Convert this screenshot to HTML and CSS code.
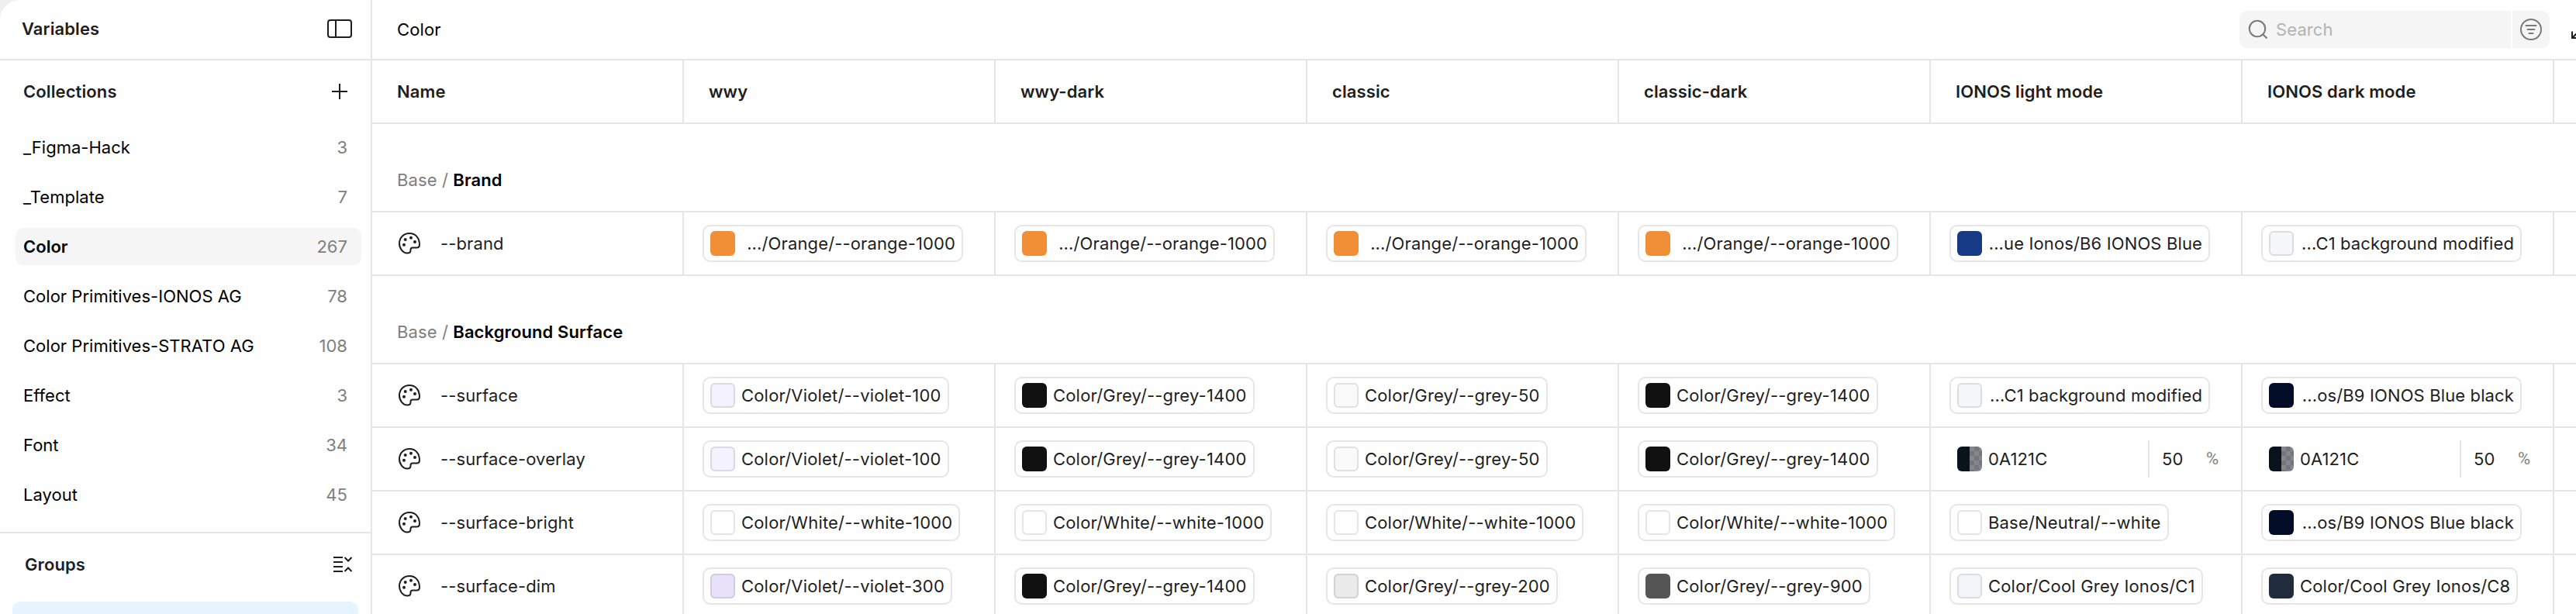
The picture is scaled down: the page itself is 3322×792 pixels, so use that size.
FILE: index.html
```html
<!DOCTYPE html>
<html lang="en">
<head>
  <meta charset="UTF-8">
  <meta name="viewport" content="width=device-width, initial-scale=1.0">
  <title>Variables</title>
  <link rel="stylesheet" href="styles.css">
</head>
<body>
  <svg class="defs" width="0" height="0">
    <symbol id="palette" viewBox="0 0 32 32">
      <path d="M16 3C8.500 3 3 8.500 3 16C3 23 8 28.500 13 28.500C16 28.500 17.500 27 17.500 25V24C17.500 22.500 18.500 21.500 20 21.500H25.500C27.800 21.500 29 20 29 17.500C29 9 24 3 16 3Z" fill="none" stroke="#1e1e1e" stroke-width="2"/>
      <g fill="#1e1e1e">
        <circle cx="10.700" cy="11" r="2"/>
        <circle cx="18" cy="8.700" r="2"/>
        <circle cx="23" cy="14" r="2"/>
        <circle cx="9" cy="17.700" r="2"/>
      </g>
    </symbol>
  </svg>

  <div class="app">
    <aside class="sidebar">
      <div class="sidebar-header">
        <h1>Variables</h1>
        <svg class="icon-panel" width="32" height="24" viewBox="0 0 32 24" fill="none" stroke="#1e1e1e" stroke-width="2">
          <rect x="1" y="1" width="30" height="22" rx="3"/>
          <path d="M11 1V23"/>
        </svg>
      </div>

      <div class="sidebar-title">
        <h2>Collections</h2>
        <svg class="icon-plus" width="20" height="20" viewBox="0 0 20 20" stroke="#1e1e1e" stroke-width="2">
          <path d="M10 0V20M0 10H20"/>
        </svg>
      </div>
      <ul class="collections">
        <li><span>_Figma-Hack</span><span class="count">3</span></li>
        <li><span>_Template</span><span class="count">7</span></li>
        <li class="active"><span>Color</span><span class="count">267</span></li>
        <li><span>Color Primitives-IONOS AG</span><span class="count">78</span></li>
        <li><span>Color Primitives-STRATO AG</span><span class="count">108</span></li>
        <li><span>Effect</span><span class="count">3</span></li>
        <li><span>Font</span><span class="count">34</span></li>
        <li><span>Layout</span><span class="count">45</span></li>
      </ul>

      <div class="sidebar-title groups-title">
        <h2>Groups</h2>
        <svg class="icon-collapse" width="24" height="20" viewBox="0 0 24 20" fill="none" stroke="#1e1e1e" stroke-width="2">
          <path d="M0 1H12M0 7H12M0 13H12M0 19H12"/>
          <path d="M14.500 1L19 5.500L23.500 1M14.500 19L19 14.500L23.500 19"/>
        </svg>
      </div>
      <div class="group-active"></div>
    </aside>

    <main class="main">
      <div class="toolbar">
        <span class="toolbar-title">Color</span>
        <div class="search">
          <div class="search-field">
            <svg width="26" height="26" viewBox="0 0 26 26" fill="none" stroke="#7a7a7a" stroke-width="2">
              <circle cx="13" cy="12" r="10.200"/>
              <path d="M20 19L25.500 24.500"/>
            </svg>
            <span>Search</span>
          </div>
          <div class="search-filter">
            <svg width="28" height="28" viewBox="0 0 28 28" fill="none" stroke="#7a7a7a" stroke-width="2">
              <circle cx="14" cy="14" r="13"/>
              <path d="M7.500 9H20.500M9.500 14H18.500M11.500 19H16.500" stroke-linecap="round"/>
            </svg>
          </div>
        </div>
        <svg class="icon-resize" width="28" height="28" viewBox="0 0 28 28" fill="none" stroke="#1e1e1e" stroke-width="2">
          <path d="M3 16.500V25H12M3.500 24.500L12 16"/>
        </svg>
      </div>

      <div class="row head">
        <div>Name</div><div>wwy</div><div>wwy-dark</div><div>classic</div><div>classic-dark</div><div>IONOS light mode</div><div>IONOS dark mode</div><div></div>
      </div>

      <div class="section"><span>Base / </span>Brand</div>
      <div class="row">
        <div class="name"><svg><use href="#palette"/></svg>--brand</div>
        <div><span class="chip cut"><i class="orange"></i><b>.../Orange/--orange-1000</b></span></div>
        <div><span class="chip cut"><i class="orange"></i><b>.../Orange/--orange-1000</b></span></div>
        <div><span class="chip cut"><i class="orange"></i><b>.../Orange/--orange-1000</b></span></div>
        <div><span class="chip cut"><i class="orange"></i><b>.../Orange/--orange-1000</b></span></div>
        <div><span class="chip cut"><i class="ionos-blue"></i><b>...ue Ionos/B6 IONOS Blue</b></span></div>
        <div><span class="chip cut"><i class="c1"></i><b>...C1 background modified</b></span></div>
        <div></div>
      </div>

      <div class="section"><span>Base / </span>Background Surface</div>
      <div class="row">
        <div class="name"><svg><use href="#palette"/></svg>--surface</div>
        <div><span class="chip"><i class="violet-100"></i><b>Color/Violet/--violet-100</b></span></div>
        <div><span class="chip"><i class="grey-1400"></i><b>Color/Grey/--grey-1400</b></span></div>
        <div><span class="chip"><i class="grey-50"></i><b>Color/Grey/--grey-50</b></span></div>
        <div><span class="chip"><i class="grey-1400"></i><b>Color/Grey/--grey-1400</b></span></div>
        <div><span class="chip cut"><i class="c1"></i><b>...C1 background modified</b></span></div>
        <div><span class="chip cut"><i class="blue-black"></i><b>...os/B9 IONOS Blue black</b></span></div>
        <div></div>
      </div>
      <div class="row">
        <div class="name"><svg><use href="#palette"/></svg>--surface-overlay</div>
        <div><span class="chip"><i class="violet-100"></i><b>Color/Violet/--violet-100</b></span></div>
        <div><span class="chip"><i class="grey-1400"></i><b>Color/Grey/--grey-1400</b></span></div>
        <div><span class="chip"><i class="grey-50"></i><b>Color/Grey/--grey-50</b></span></div>
        <div><span class="chip"><i class="grey-1400"></i><b>Color/Grey/--grey-1400</b></span></div>
        <div><span class="raw"><i class="alpha"></i><b>0A121C</b><em>50</em><small>%</small></span></div>
        <div><span class="raw"><i class="alpha"></i><b>0A121C</b><em>50</em><small>%</small></span></div>
        <div></div>
      </div>
      <div class="row">
        <div class="name"><svg><use href="#palette"/></svg>--surface-bright</div>
        <div><span class="chip"><i class="white"></i><b>Color/White/--white-1000</b></span></div>
        <div><span class="chip"><i class="white"></i><b>Color/White/--white-1000</b></span></div>
        <div><span class="chip"><i class="white"></i><b>Color/White/--white-1000</b></span></div>
        <div><span class="chip"><i class="white"></i><b>Color/White/--white-1000</b></span></div>
        <div><span class="chip"><i class="white"></i><b>Base/Neutral/--white</b></span></div>
        <div><span class="chip cut"><i class="blue-black"></i><b>...os/B9 IONOS Blue black</b></span></div>
        <div></div>
      </div>
      <div class="row">
        <div class="name"><svg><use href="#palette"/></svg>--surface-dim</div>
        <div><span class="chip"><i class="violet-300"></i><b>Color/Violet/--violet-300</b></span></div>
        <div><span class="chip"><i class="grey-1400"></i><b>Color/Grey/--grey-1400</b></span></div>
        <div><span class="chip"><i class="grey-200"></i><b>Color/Grey/--grey-200</b></span></div>
        <div><span class="chip"><i class="grey-900"></i><b>Color/Grey/--grey-900</b></span></div>
        <div><span class="chip"><i class="cool-1"></i><b>Color/Cool Grey Ionos/C1</b></span></div>
        <div><span class="chip"><i class="cool-8"></i><b>Color/Cool Grey Ionos/C8</b></span></div>
        <div></div>
      </div>
    </main>
  </div>
</body>
</html>
```
FILE: styles.css
```css
* {
  box-sizing: border-box;
}

body {
  margin: 0;
  background-color: #f0f0f0;
  font-family: Inter, "Liberation Sans", sans-serif;
  font-size: 22px;
  line-height: 32px;
  letter-spacing: 0.11px;
  color: #1e1e1e;
  overflow: hidden;
}

.defs {
  display: block;
}

.app {
  display: flex;
  height: 792px;
  overflow: hidden;
  background-color: #fff;
  border-top-left-radius: 26px;
}

h1,
h2 {
  margin: 0;
  font-size: 22px;
  font-weight: 600;
}

/* Sidebar */
.sidebar {
  flex: none;
  width: 480px;
  border-right: 2px solid #e6e6e6;
}

.sidebar-header {
  display: flex;
  align-items: center;
  justify-content: space-between;
  height: 78px;
  padding: 0 24px 2px 28px;
  border-bottom: 2px solid #e6e6e6;
}

.sidebar-title {
  display: flex;
  align-items: center;
  justify-content: space-between;
  height: 80px;
  padding: 0 30px;
}

.collections {
  display: flex;
  flex-direction: column;
  gap: 16px;
  height: 528px;
  margin: 0;
  padding: 8px 12px 0 20px;
  list-style: none;
  letter-spacing: 0.02px;
  color: #000;
}

.collections li {
  display: flex;
  align-items: center;
  justify-content: space-between;
  height: 48px;
  padding: 0 18px 0 10px;
  border-radius: 10px;
}

.collections .active {
  background-color: #f5f5f5;
  font-weight: 600;
}

.count {
  font-weight: 400;
  color: #808080;
}

.groups-title {
  height: 82px;
  padding: 0 24px 0 32px;
  border-top: 2px solid #e6e6e6;
}

.group-active {
  height: 48px;
  margin: 8px 16px;
  border-radius: 10px;
  background-color: #e5f4ff;
}

/* Toolbar */
.main {
  flex: 1;
  min-width: 0;
}

.toolbar {
  display: flex;
  align-items: center;
  height: 78px;
  padding-left: 32px;
  border-bottom: 2px solid #e6e6e6;
  color: #000;
}

.search {
  display: flex;
  gap: 2px;
  margin-left: auto;
}

.search-field,
.search-filter {
  display: flex;
  align-items: center;
  height: 48px;
  background-color: #f5f5f5;
}

.search-field {
  gap: 11px;
  width: 350px;
  padding-left: 10px;
  border-radius: 10px 0 0 10px;
  color: #b3b3b3;
}

.search-filter {
  justify-content: center;
  width: 48px;
  border-radius: 0 10px 10px 0;
}

.icon-resize {
  margin: 0 -20px 0 26px;
}

/* Table */
.row {
  display: grid;
  grid-template-columns: repeat(7, 402px) 1fr;
  height: 82px;
  border-bottom: 2px solid #e6e6e6;
}

.row > div {
  display: flex;
  align-items: center;
  padding-left: 24px;
  border-right: 2px solid #e6e6e6;
}

.row > div:last-child {
  border-right: none;
}

.row.head > div {
  padding-left: 32px;
  font-weight: 600;
}

.row > .name {
  gap: 24px;
  padding-left: 32px;
}

.name svg {
  width: 32px;
  height: 32px;
}

.section {
  height: 114px;
  padding: 56px 32px 0;
  border-bottom: 2px solid #e6e6e6;
  font-weight: 600;
  color: #000;
}

.section span {
  font-weight: 400;
  color: #808080;
}

/* Variable values */
.chip {
  display: flex;
  align-items: center;
  gap: 8px;
  height: 48px;
  padding: 0 8px;
  border: 2px solid #e6e6e6;
  border-radius: 10px;
  letter-spacing: 0.18px;
  white-space: nowrap;
}

.cut {
  justify-content: space-between;
  width: 336px;
  letter-spacing: 0.13px;
}

.row b {
  font-weight: 400;
}

.row i {
  flex: none;
  width: 32px;
  height: 32px;
  border: 2px solid rgba(0, 0, 0, 0.1);
  border-radius: 6px;
}

.raw {
  display: flex;
  align-items: center;
  width: 376px;
  height: 48px;
  padding-left: 10px;
}

.raw b {
  width: 214px;
  padding-left: 8px;
}

.raw em {
  width: 75px;
  height: 48px;
  padding-left: 16px;
  border-left: 2px solid #e6e6e6;
  line-height: 48px;
  font-style: normal;
}

.raw small {
  font-family: Roboto, sans-serif;
  font-size: 22px;
  color: #808080;
}

/* Swatches */
.row .orange,
.row .ionos-blue,
.row .grey-1400,
.row .grey-900,
.row .blue-black,
.row .cool-8,
.row .alpha {
  border: none;
}

.orange { background-color: #f08f35; }
.ionos-blue { background-color: #163a86; }
.c1 { background-color: #f5f7fb; }
.violet-100 { background-color: #f5f2ff; }
.violet-300 { background-color: #e7e1f9; }
.grey-50 { background-color: #fafafa; }
.grey-200 { background-color: #eaeaea; }
.grey-900 { background-color: #555; }
.grey-1400 { background-color: #111; }
.blue-black { background-color: #030d28; }
.white { background-color: #fff; }
.cool-1 { background-color: #f3f5fa; }
.cool-8 { background-color: #202c3e; }

.alpha {
  background:
    linear-gradient(90deg, #0a121c 50%, transparent 50%),
    repeating-conic-gradient(#73777c 0 25%, #84888d 0 50%) 4px 0 / 12px 12px;
}
```
